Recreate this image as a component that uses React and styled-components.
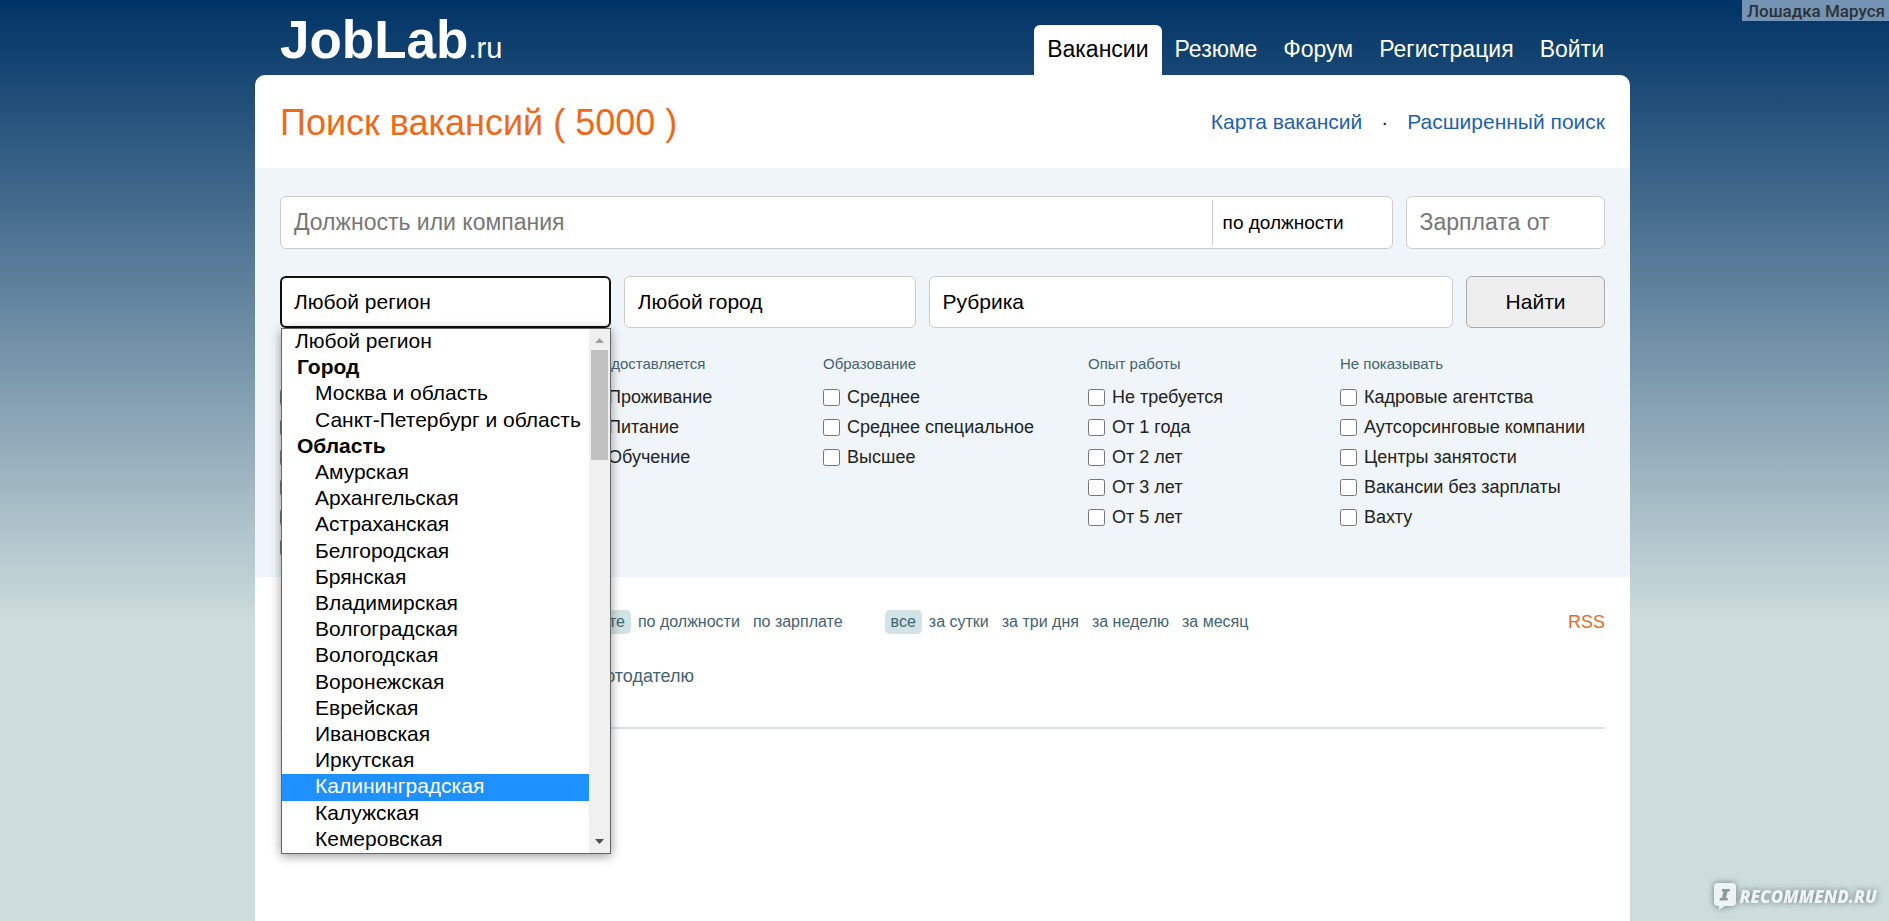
import React, { useState } from 'react';
import styled, { createGlobalStyle } from 'styled-components';


const GlobalStyle = createGlobalStyle`
  * {
    box-sizing: border-box;
  }
  body {
    margin: 0;
    font-family: "Liberation Sans", Arial, sans-serif;
    font-size: 18px;
    color: #222;
    background: #cddcdc;
  }
  input, select, button {
    font-family: inherit;
  }
`;

//Styled Components
const Page = styled.div`
  display: flex;
  flex-direction: column;
  min-height: 100vh;
  padding: 0 4px 0 0;
  background: linear-gradient(#003366 0, #cddcdc 620px);
`;

const Container = styled.div`
  display: flex;
  flex-direction: column;
  flex: 1;
  width: 100%;
  max-width: 1375px;
  margin: 0 auto;
`;

const Header = styled.header`
  display: flex;
  justify-content: space-between;
  align-items: flex-end;
  height: 75px;
  padding: 0 13px 0 25px;
`;

const Logo = styled.a`
  color: #fff;
  font-size: 53px;
  font-weight: 700;
  line-height: 54px;
  text-decoration: none;
`;

const LogoZone = styled.span`
  font-size: 29px;
  font-weight: 400;
`;

const Nav = styled.nav`
  display: flex;
`;

const NavLink = styled.a`
  height: 50px;
  padding: 0 13px;
  border-radius: 6px 6px 0 0;
  background: ${({ $active }) => ($active ? '#fff' : 'transparent')};
  color: ${({ $active }) => ($active ? '#000' : '#ffffee')};
  font-size: 23px;
  line-height: 48px;
  text-decoration: none;
`;

const Card = styled.main`
  flex: 1;
  border-radius: 10px 10px 0 0;
  background: #fff;
`;

const TitleRow = styled.div`
  display: flex;
  justify-content: space-between;
  align-items: center;
  height: 93px;
  padding: 0 25px;
`;

const Title = styled.h1`
  margin: 0;
  padding-top: 2px;
  color: #ee6a1a;
  font-size: 36px;
  font-weight: 400;
`;

const TitleLinks = styled.div`
  display: flex;
  gap: 19px;
  color: #222;
  font-size: 21px;
`;

const BlueLink = styled.a`
  color: #1e62ac;
  text-decoration: none;
`;

const SearchForm = styled.form`
  padding: 28px 25px 15px;
  background: #f0f5f9;
`;

const FieldRow = styled.div`
  display: flex;
  gap: 13px;
  margin-bottom: 27px;
`;

const TextBox = styled.div`
  display: flex;
  align-items: center;
  flex: ${({ $flex }) => $flex};
  min-width: 0;
  height: 53px;
  border: 1px solid #ccc;
  border-radius: 6px;
  background: #fff;
`;

const TextInput = styled.input`
  flex: 1;
  min-width: 0;
  height: 100%;
  padding: 0 13px;
  border: none;
  outline: none;
  background: transparent;
  font-size: 23px;
  &::placeholder {
    color: #777;
  }
`;

const TypeSelect = styled.select`
  width: 180px;
  height: 45px;
  padding: 0 10px;
  appearance: none;
  border: none;
  border-left: 1px solid #ccc;
  background: transparent;
  color: #000;
  font-size: 19px;
`;

const SelectWrapper = styled.div`
  position: relative;
  flex: ${({ $flex }) => $flex};
`;

const Select = styled.select`
  display: block;
  width: 100%;
  height: 52px;
  padding: 0 ${({ $open }) => ($open ? '12px' : '13px')} 2px;
  appearance: none;
  border: ${({ $open }) => ($open ? '2px solid #101010' : '1px solid #ccc')};
  border-radius: 6px;
  outline: none;
  background: #fff;
  color: #000;
  font-size: 21px;
`;

const SubmitButton = styled.button`
  flex: 137;
  height: 52px;
  padding: 0;
  border: 1px solid #aaa;
  border-radius: 6px;
  background: #eee;
  color: #000;
  font-size: 21px;
`;

//rozwinieta lista regionow
const DropDown = styled.div`
  position: absolute;
  z-index: 2;
  top: 100%;
  left: 1px;
  right: 0;
  display: flex;
  height: 526px;
  border: 1px solid #666;
  background: #fff;
  box-shadow: 0 2px 10px rgba(0, 0, 0, .4);
`;

const OptionList = styled.ul`
  display: flex;
  flex-direction: column;
  flex: 1;
  margin: 0;
  padding: 0;
  list-style: none;
`;

const Option = styled.li`
  flex: 1;
  padding-left: ${({ $group, $nested }) => ($nested ? '33px' : $group ? '15px' : '13px')};
  background: ${({ $selected }) => ($selected ? '#1e90ff' : 'transparent')};
  color: ${({ $selected }) => ($selected ? '#fff' : '#000')};
  font-size: 21px;
  font-weight: ${({ $group }) => ($group ? 700 : 400)};
  line-height: 24px;
  white-space: nowrap;
  cursor: default;
`;

const ScrollBar = styled.div`
  display: flex;
  flex-direction: column;
  justify-content: space-between;
  align-items: center;
  width: 21px;
  background: #f0f0f0;
`;

const ScrollTop = styled.div`
  display: flex;
  flex-direction: column;
`;

const ScrollThumb = styled.div`
  width: 17px;
  height: 110px;
  background: #c1c1c1;
`;

const Filters = styled.div`
  display: grid;
  grid-template-columns: 304fr 239fr 265fr 252fr 265fr;
`;

const FilterGroup = styled.fieldset`
  min-width: 0;
  margin: 0;
  padding: 0;
  border: none;
`;

const FilterTitle = styled.legend`
  height: 27px;
  padding: 0;
  color: #446373;
  font-size: 15px;
  line-height: 18px;
`;

const CheckLabel = styled.label`
  display: flex;
  align-items: center;
  gap: 7px;
  height: 30px;
  white-space: nowrap;
`;

const CheckBox = styled.input`
  width: 17px;
  height: 17px;
  margin: 0;
`;

const Results = styled.section`
  margin: 0 25px;
  padding: 33px 0 36px;
  border-bottom: 2px solid #dbe1e6;
`;

const SortRow = styled.div`
  display: flex;
  align-items: center;
  padding-left: 283px;
`;

const SortGroup = styled.div`
  display: flex;
  gap: 1px;
  margin-right: 36px;
`;

const SortLink = styled.a`
  padding: 0 6px;
  border-radius: 5px;
  background: ${({ $active }) => ($active ? '#d1e3e4' : 'transparent')};
  color: #446373;
  font-size: 16px;
  line-height: 24px;
  text-decoration: none;
`;

const RssLink = styled.a`
  margin-left: auto;
  color: #ee6a1a;
  font-size: 18px;
  text-decoration: none;
`;

const GroupRow = styled.div`
  width: 414px;
  margin-top: 27px;
  line-height: 30px;
  text-align: right;
`;

const GroupLink = styled.a`
  color: #446373;
  text-decoration: none;
`;

const UserTag = styled.div`
  position: absolute;
  top: 0;
  right: 0;
  padding: 1px 4px 0 5px;
  background: #7594b3;
  color: #2b3138;
  font-family: Roboto, sans-serif;
  font-size: 17px;
  font-weight: 500;
  line-height: 20px;
`;

const Watermark = styled.div`
  position: fixed;
  right: 12px;
  bottom: 11px;
  display: flex;
  align-items: center;
  gap: 2px;
  color: #eef3f6;
  filter: drop-shadow(0 0 3px rgba(80, 100, 100, .8));
  font-family: "Open Sans", sans-serif;
  font-size: 17px;
  font-style: italic;
  font-weight: 800;
`;
//

const regions = [
  { name: 'Любой регион' },
  { name: 'Город', group: true },
  { name: 'Москва и область', nested: true },
  { name: 'Санкт-Петербург и область', nested: true },
  { name: 'Область', group: true },
  ...[
    'Амурская', 'Архангельская', 'Астраханская', 'Белгородская', 'Брянская',
    'Владимирская', 'Волгоградская', 'Вологодская', 'Воронежская', 'Еврейская',
    'Ивановская', 'Иркутская', 'Калининградская', 'Калужская', 'Кемеровская',
  ].map((name) => ({ name, nested: true })),
];

const schedules = ['Полный день', 'Сменный график', 'Неполный день', 'Свободный график', 'Удаленная работа', 'Вахта'];

const filters = [
  { title: 'Предоставляется', items: ['Проживание', 'Питание', 'Обучение'] },
  { title: 'Образование', items: ['Среднее', 'Среднее специальное', 'Высшее'] },
  { title: 'Опыт работы', items: ['Не требуется', 'От 1 года', 'От 2 лет', 'От 3 лет', 'От 5 лет'] },
  { title: 'Не показывать', items: ['Кадровые агентства', 'Аутсорсинговые компании', 'Центры занятости', 'Вакансии без зарплаты', 'Вахту'] },
];

const navItems = ['Вакансии', 'Резюме', 'Форум', 'Регистрация', 'Войти'];
const sortItems = ['по дате', 'по должности', 'по зарплате'];
const periodItems = ['все', 'за сутки', 'за три дня', 'за неделю', 'за месяц'];

const RegionDropDown = () => {
  const [selected, setSelected] = useState('Калининградская');
  return (
    <DropDown>
      <OptionList role="listbox" aria-label="Регион">
        {regions.map(({ name, group, nested }) => (
          <Option
            key={name}
            role={group ? 'presentation' : 'option'}
            aria-selected={group ? undefined : name === selected}
            $group={group}
            $nested={nested}
            $selected={name === selected}
            onMouseEnter={() => !group && setSelected(name)}
          >
            {name}
          </Option>
        ))}
      </OptionList>
      <ScrollBar>
        <ScrollTop>
          <svg width="17" height="21" viewBox="0 0 17 21"><path d="M4 14h9L8.500 9z" fill="#a3a3a3" /></svg>
          <ScrollThumb />
        </ScrollTop>
        <svg width="17" height="21" viewBox="0 0 17 21"><path d="M4 7h9L8.500 12z" fill="#505050" /></svg>
      </ScrollBar>
    </DropDown>
  );
};

const FilterColumn = ({ title, items }) => (
  <FilterGroup>
    <FilterTitle>{title}</FilterTitle>
    {items.map((item) => (
      <CheckLabel key={item}>
        <CheckBox type="checkbox" />
        {item}
      </CheckLabel>
    ))}
  </FilterGroup>
);

const SortLinks = ({ items }) => (
  <SortGroup>
    {items.map((item, index) => (
      <SortLink key={item} href="#" $active={index === 0}>{item}</SortLink>
    ))}
  </SortGroup>
);

const App = () => {
  return (
    <Page>
      <GlobalStyle />
      <Container>
        <Header>
          <Logo href="#">JobLab<LogoZone>.ru</LogoZone></Logo>
          <Nav>
            {navItems.map((item, index) => (
              <NavLink key={item} href="#" $active={index === 0}>{item}</NavLink>
            ))}
          </Nav>
        </Header>
        <Card>
          <TitleRow>
            <Title>Поиск вакансий ( 5000 )</Title>
            <TitleLinks>
              <BlueLink href="#">Карта вакансий</BlueLink>
              <span>·</span>
              <BlueLink href="#">Расширенный поиск</BlueLink>
            </TitleLinks>
          </TitleRow>
          <SearchForm>
            <FieldRow>
              <TextBox $flex="1114">
                <TextInput type="text" placeholder="Должность или компания" aria-label="Должность или компания" />
                <TypeSelect aria-label="Где искать">
                  <option>по должности</option>
                </TypeSelect>
              </TextBox>
              <TextBox $flex="198">
                <TextInput type="text" placeholder="Зарплата от" aria-label="Зарплата от" />
              </TextBox>
            </FieldRow>
            <FieldRow>
              <SelectWrapper $flex="331">
                <Select $open aria-label="Регион">
                  <option>Любой регион</option>
                </Select>
                <RegionDropDown />
              </SelectWrapper>
              <SelectWrapper $flex="292">
                <Select aria-label="Город">
                  <option>Любой город</option>
                </Select>
              </SelectWrapper>
              <SelectWrapper $flex="525">
                <Select aria-label="Рубрика">
                  <option>Рубрика</option>
                </Select>
              </SelectWrapper>
              <SubmitButton type="button">Найти</SubmitButton>
            </FieldRow>
            <Filters>
              <FilterGroup aria-label="График работы">
                <FilterTitle />
                {schedules.map((item) => (
                  <CheckLabel key={item}>
                    <CheckBox type="checkbox" aria-label={item} />
                  </CheckLabel>
                ))}
              </FilterGroup>
              {filters.map((filter) => (
                <FilterColumn key={filter.title} title={filter.title} items={filter.items} />
              ))}
            </Filters>
          </SearchForm>
          <Results>
            <SortRow>
              <SortLinks items={sortItems} />
              <SortLinks items={periodItems} />
              <RssLink href="#">RSS</RssLink>
            </SortRow>
            <GroupRow>
              <GroupLink href="#">по работодателю</GroupLink>
            </GroupRow>
          </Results>
        </Card>
      </Container>
      <UserTag>Лошадка Маруся</UserTag>
      <Watermark>
        <svg width="24" height="28" viewBox="0 0 24 28">
          <path d="M5 1h14q4 0 4 4v15q0 4-4 4h-7l-6 4v-4H5q-4 0-4-4V5q0-4 4-4z" fill="#eef3f6" />
          <path d="M9 7h8l-.5 2.500h-2L13 16h2l-.5 2.500h-8L7 16h2l1.500-6.500h-2z" fill="#8b9898" />
        </svg>
        RECOMMEND.RU
      </Watermark>
    </Page>
  );
};

export default App;
